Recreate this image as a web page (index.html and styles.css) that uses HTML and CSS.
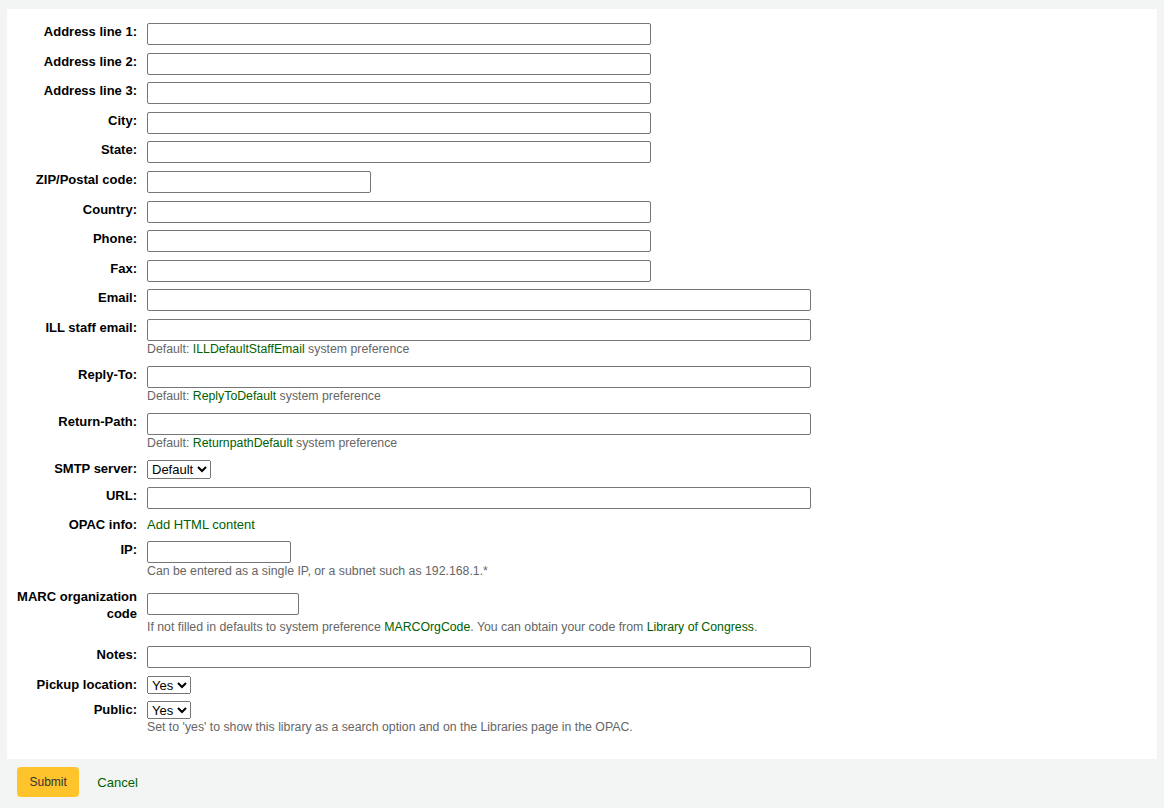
FILE: index.html
```html
<!DOCTYPE html>
<html lang="en">
<head>
<meta charset="utf-8">
<title>Library</title>
<link rel="stylesheet" href="styles.css">
</head>
<body>
<form class="page">
  <fieldset class="rows">
    <ol>
      <li><label>Address line 1:</label><div class="field"><input type="text" class="w-md"></div></li>
      <li><label>Address line 2:</label><div class="field"><input type="text" class="w-md"></div></li>
      <li><label>Address line 3:</label><div class="field"><input type="text" class="w-md"></div></li>
      <li><label>City:</label><div class="field"><input type="text" class="w-md"></div></li>
      <li><label>State:</label><div class="field"><input type="text" class="w-md"></div></li>
      <li><label>ZIP/Postal code:</label><div class="field"><input type="text" class="w-zip"></div></li>
      <li><label>Country:</label><div class="field"><input type="text" class="w-md"></div></li>
      <li><label>Phone:</label><div class="field"><input type="text" class="w-md"></div></li>
      <li><label>Fax:</label><div class="field"><input type="text" class="w-md"></div></li>
      <li><label>Email:</label><div class="field"><input type="text" class="w-lg"></div></li>
      <li><label>ILL staff email:</label><div class="field"><input type="text" class="w-lg"><div class="hint">Default: <a href="#">ILLDefaultStaffEmail</a> system preference</div></div></li>
      <li><label>Reply-To:</label><div class="field"><input type="text" class="w-lg"><div class="hint">Default: <a href="#">ReplyToDefault</a> system preference</div></div></li>
      <li><label>Return-Path:</label><div class="field"><input type="text" class="w-lg"><div class="hint">Default: <a href="#">ReturnpathDefault</a> system preference</div></div></li>
      <li class="row-select"><label>SMTP server:</label><div class="field"><select><option>Default</option></select></div></li>
      <li><label>URL:</label><div class="field"><input type="text" class="w-lg"></div></li>
      <li><label>OPAC info:</label><div class="field"><a href="#" class="textlink">Add HTML content</a></div></li>
      <li><label>IP:</label><div class="field"><input type="text" class="w-ip"><div class="hint">Can be entered as a single IP, or a subnet such as 192.168.1.*</div></div></li>
      <li class="row-marc"><label>MARC organization code</label><div class="field"><input type="text" class="w-marc"><div class="hint">If not filled in defaults to system preference <a href="#">MARCOrgCode</a>. You can obtain your code from <a href="#">Library of Congress</a>.</div></div></li>
      <li><label>Notes:</label><div class="field"><input type="text" class="w-lg"></div></li>
      <li><label>Pickup location:</label><div class="field"><select><option>Yes</option><option>No</option></select></div></li>
      <li><label>Public:</label><div class="field"><select><option>Yes</option><option>No</option></select><div class="hint">Set to 'yes' to show this library as a search option and on the Libraries page in the OPAC.</div></div></li>
    </ol>
  </fieldset>
  <fieldset class="action">
    <button type="button" class="btn-submit">Submit</button>
    <a href="#" class="cancel">Cancel</a>
  </fieldset>
</form>
</body>
</html>
```

FILE: styles.css
```css
html, body {
  margin: 0;
  padding: 0;
}
body {
  background: #f3f4f4;
  font-family: "Liberation Sans", Arial, sans-serif;
  font-size: 13px;
  color: #000;
}
.page {
  margin: 0;
  padding: 9px 7px 0;
}
fieldset {
  border: 0;
  margin: 0;
  padding: 0;
}
.rows {
  background: #fff;
  padding: 14px 0 14.6px;
}
.rows ol {
  list-style: none;
  margin: 0;
  padding: 0;
}
.rows li {
  display: flex;
  align-items: flex-start;
  padding-bottom: 7.6px;
}
.rows label {
  width: 130px;
  flex: none;
  margin-right: 10px;
  text-align: right;
  font-weight: bold;
  line-height: 17px;
  font-size: 13px;
}
.field {
  display: flex;
  flex-direction: column;
  align-items: flex-start;
}
input[type="text"] {
  box-sizing: border-box;
  height: 22px;
  border: 1px solid #767676;
  border-radius: 2px;
  padding: 1px 2px;
  font-family: "Liberation Sans", Arial, sans-serif;
  font-size: 13px;
  margin: 0;
  background: #fff;
}
.w-md { width: 504px; }
.w-lg { width: 664px; }
.w-zip { width: 224px; }
.w-ip { width: 144px; }
.w-marc { width: 152px; }
select {
  font-family: "Liberation Sans", Arial, sans-serif;
  font-size: 13px;
  height: 18px;
  margin: 0;
  color: #000;
}
.row-select select {
  margin-top: 0.5px;
  height: 18.5px;
}
.hint {
  font-size: 12.3px;
  line-height: 17.4px;
  color: #666;
}
a {
  color: #006100;
  text-decoration: none;
}
.textlink {
  line-height: 17px;
  font-size: 13px;
}
.rows li.row-marc {
  padding-bottom: 10.3px;
}
.row-marc .field {
  margin-top: 5.5px;
}
.row-marc .hint {
  margin-top: 3.3px;
}
.action {
  display: flex;
  align-items: center;
  padding: 8px 10px;
}
.btn-submit {
  background: #ffc32b;
  border: 0;
  border-radius: 4px;
  height: 30px;
  padding: 0 12.5px;
  font-family: "Liberation Sans", Arial, sans-serif;
  font-size: 12px;
  color: #333;
  cursor: pointer;
}
.cancel {
  margin-left: 18px;
  font-size: 13px;
}
```
